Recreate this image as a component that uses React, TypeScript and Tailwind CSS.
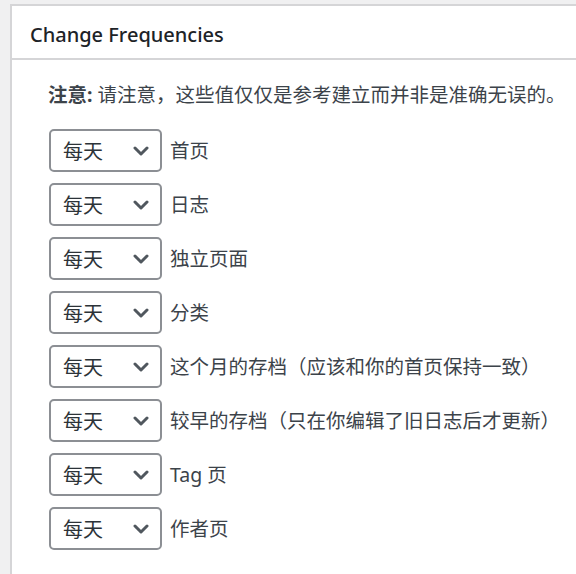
import React from "react";

const rows = [
  "首页",
  "日志",
  "独立页面",
  "分类",
  "这个月的存档（应该和你的首页保持一致）",
  "较早的存档（只在你编辑了旧日志后才更新）",
  "Tag 页",
  "作者页",
];

function Chevron() {
  return (
    <svg width="16" height="10" viewBox="0 0 16 10" fill="none">
      <polyline
        points="2,2 8,8 14,2"
        stroke="#50575e"
        strokeWidth="3"
        strokeLinecap="round"
        strokeLinejoin="round"
      />
    </svg>
  );
}

export default function App() {
  return (
    <div
      className="h-[574px] w-[576px] overflow-hidden bg-[#f0f0f1] pl-[10px] pt-[4px]"
      style={{ fontFamily: '"Noto Sans", "Noto Sans CJK SC", sans-serif' }}
    >
      <div className="h-[600px] w-[620px] border-2 border-[#d5d5d7] bg-white">
        <div className="flex h-[54px] items-center border-b-2 border-[#d5d5d7] pl-[18px] pt-[5px]">
          <h2 className="text-[20px] font-medium leading-none text-[#1d2327]">
            Change Frequencies
          </h2>
        </div>
        <div className="pl-[36px] pt-[21px]">
          <p className="text-[19.5px] leading-[28px] text-[#3c434a]">
            <strong className="font-bold">注意:</strong> 请注意，这些值仅仅是参考建立而并非是准确无误的。
          </p>
          <div className="mt-[20px] flex flex-col gap-[11px]">
            {rows.map((r) => (
              <div key={r} className="flex items-center">
                <div className="ml-[1px] flex h-[43px] w-[113px] items-center justify-between rounded-[5px] border-2 border-[#8c8f94] pl-[12px] pr-[11px]">
                  <span className="pt-[3px] text-[20px] leading-none text-[#2c3338]">
                    每天
                  </span>
                  <Chevron />
                </div>
                <span className="ml-[8px] text-[19.5px] leading-none text-[#3c434a]">
                  {r}
                </span>
              </div>
            ))}
          </div>
        </div>
      </div>
    </div>
  );
}
